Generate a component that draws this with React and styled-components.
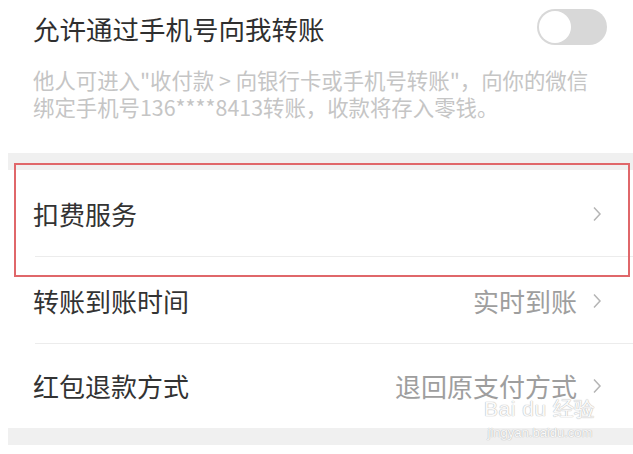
import styled, { createGlobalStyle } from 'styled-components';

const GlobalStyle = createGlobalStyle`
  html, body {
    margin: 0;
    padding: 0;
    background: #fff;
  }
  body {
    font-family: "Noto Sans CJK SC", "Noto Sans", sans-serif;
    color: #333;
  }
`;

const Page = styled.div`
  width: 633px;
  height: 454px;
  overflow: hidden;
  position: relative;
  background: #fff;
`;

const TopSection = styled.section`
  height: 153px;
  padding: 0 26px 0 33px;
  box-sizing: border-box;
`;

const TitleRow = styled.div`
  height: 58px;
  display: flex;
  align-items: center;
  justify-content: space-between;
`;

const Title = styled.div`
  font-size: 26.5px;
  line-height: 1;
  color: #2f2f2f;
  margin-top: 1px;
`;

const Toggle = styled.div`
  width: 70px;
  height: 36px;
  border-radius: 18px;
  background: #d8d8d8;
  position: relative;
  margin-top: -4px;

  &::after {
    content: '';
    position: absolute;
    left: 2px;
    top: 2px;
    width: 32px;
    height: 32px;
    border-radius: 50%;
    background: #fff;
  }
`;

const Description = styled.p`
  margin: 8px 0 0;
  font-size: 21.4px;
  line-height: 27px;
  color: #c5c5c5;
  white-space: nowrap;
`;

const Band = styled.div`
  margin-left: 8px;
  height: ${(p) => p.$h}px;
  background: #f0f0f0;
`;

const List = styled.div`
  position: relative;
`;

const Row = styled.div`
  height: ${(p) => p.$h}px;
  display: flex;
  align-items: center;
  padding: 0 31px 0 33px;
  position: relative;

  &::after {
    content: '';
    display: ${(p) => (p.$last ? 'none' : 'block')};
    position: absolute;
    left: 35px;
    right: 0;
    bottom: 0;
    height: 1px;
    background: #ececec;
  }
`;

const Label = styled.span`
  flex: 1;
  font-size: 26px;
  line-height: 1;
  color: #333;
`;

const Value = styled.span`
  font-size: 26px;
  line-height: 1;
  color: #9e9e9e;
  margin-right: 15px;
`;

const Chevron = () => (
  <svg width="10" height="16" viewBox="0 0 10 16">
    <path d="M2 1.5 L8 8 L2 14.5" fill="none" stroke="#b5b5b5" strokeWidth="1.5" />
  </svg>
);

const Highlight = styled.div`
  position: absolute;
  left: 14px;
  right: 3px;
  top: -7px;
  height: 114px;
  border: 2px solid #e0676a;
  box-sizing: border-box;
  pointer-events: none;
`;

const Watermark = styled.div`
  position: absolute;
  right: 38px;
  bottom: 14px;
  width: 110px;
  display: flex;
  flex-direction: column;
  align-items: center;
  color: rgba(255, 255, 255, 0.95);
  text-shadow: 0 0 1px #b8b8b8, 0 0 1px #b8b8b8;
  font-family: "Liberation Sans", sans-serif;
  pointer-events: none;
`;

const WatermarkMain = styled.div`
  font-size: 21px;
  line-height: 24px;
  letter-spacing: 0.5px;
  white-space: nowrap;
`;

const WatermarkSub = styled.div`
  font-size: 13px;
  line-height: 15px;
  margin-top: 4px;
  white-space: nowrap;
`;

const rows = [
  { label: '扣费服务', h: 87 },
  { label: '转账到账时间', value: '实时到账', h: 87 },
  { label: '红包退款方式', value: '退回原支付方式', h: 84, last: true },
];

export default function App() {
  return (
    <>
      <GlobalStyle />
      <Page>
        <TopSection>
          <TitleRow>
            <Title>允许通过手机号向我转账</Title>
            <Toggle />
          </TitleRow>
          <Description>
            他人可进入"收付款 &gt; 向银行卡或手机号转账"，向你的微信
            <br />
            绑定手机号136****8413转账，收款将存入零钱。
          </Description>
        </TopSection>
        <Band $h={17} />
        <List>
          {rows.map((r) => (
            <Row key={r.label} $h={r.h} $last={r.last}>
              <Label>{r.label}</Label>
              {r.value && <Value>{r.value}</Value>}
              <Chevron />
            </Row>
          ))}
          <Highlight />
        </List>
        <Band $h={17} />
        <Watermark>
          <WatermarkMain>Bai du 经验</WatermarkMain>
          <WatermarkSub>jingyan.baidu.com</WatermarkSub>
        </Watermark>
      </Page>
    </>
  );
}
